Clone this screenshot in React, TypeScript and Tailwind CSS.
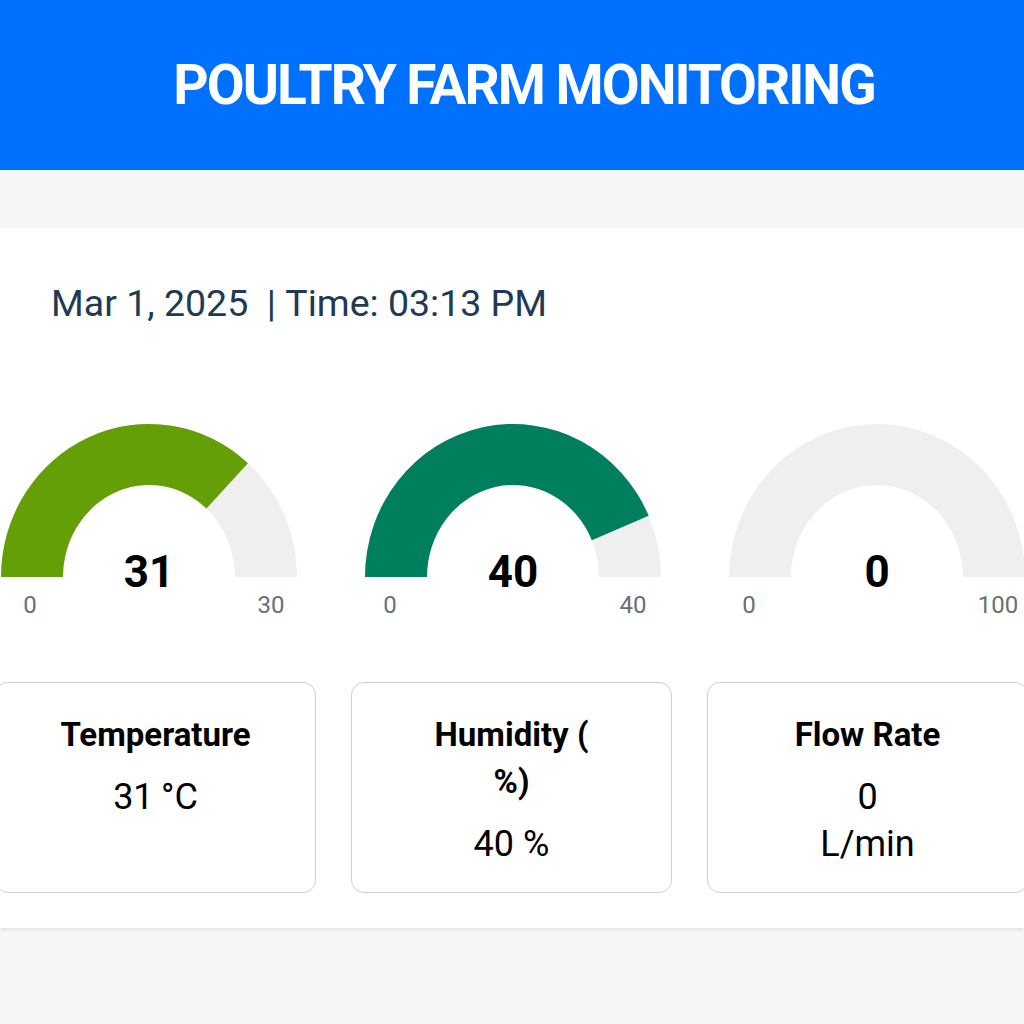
import React from "react";

type GaugeProps = { value: string; min: string; max: string; frac: number; color: string; lx: number; rx: number };

function ringPath(a0: number, a1: number) {
  const cx = 182, cy = 157;
  const orx = 148, ory = 153, irx = 86, iry = 92;
  const r = (d: number) => (d * Math.PI) / 180;
  const p = (rx: number, ry: number, d: number) => [cx + rx * Math.cos(r(d)), cy - ry * Math.sin(r(d))];
  const [ox0, oy0] = p(orx, ory, a0);
  const [ox1, oy1] = p(orx, ory, a1);
  const [ix1, iy1] = p(irx, iry, a1);
  const [ix0, iy0] = p(irx, iry, a0);
  return `M ${ox0} ${oy0} A ${orx} ${ory} 0 0 1 ${ox1} ${oy1} L ${ix1} ${iy1} A ${irx} ${iry} 0 0 0 ${ix0} ${iy0} Z`;
}

function Gauge({ value, min, max, frac, color, lx, rx }: GaugeProps) {
  const split = 180 - 180 * frac;
  return (
    <div className="w-[364px] shrink-0 flex flex-col">
      <div className="relative h-[160px]">
        <svg width="364" height="160" viewBox="0 0 364 160">
          <path d={ringPath(180, 0)} fill="#efefef" />
          {frac > 0 && <path d={ringPath(180, split)} fill={color} />}
        </svg>
        <div className="absolute left-0 right-0 top-[130px] text-center text-[44px] leading-none font-bold text-black">
          {value}
        </div>
      </div>
      <div className="relative mt-[13px] h-[24px] text-[24px] leading-[24px] text-[#687073]">
        <span className="absolute top-0 w-[60px] text-center" style={{ left: lx - 30 }}>{min}</span>
        <span className="absolute top-0 w-[60px] text-center" style={{ left: rx - 30 }}>{max}</span>
      </div>
    </div>
  );
}

function StatBox({ title, lines }: { title: string[]; lines: string[] }) {
  return (
    <div className="w-[321px] h-[211px] shrink-0 rounded-[13px] border border-[#cfcfcf] bg-white pt-[28px] text-center text-black">
      {title.map((t, i) => (
        <div key={i} className="text-[33px] leading-[47px] font-bold">{t}</div>
      ))}
      <div className="mt-[16px]">
        {lines.map((l, i) => (
          <div key={i} className="text-[36px] leading-[47px]">{l}</div>
        ))}
      </div>
    </div>
  );
}

export default function App() {
  return (
    <div className="min-h-[1024px] w-[1024px] overflow-hidden bg-[#f6f6f6]" style={{ fontFamily: "Roboto, 'Noto Sans', sans-serif" }}>
      <header className="h-[170px] bg-[#0070ff] flex items-center justify-center">
        <h1 className="text-[55px] font-bold text-white tracking-[-2px] ml-[24px]">POULTRY FARM MONITORING</h1>
      </header>
      <main className="mt-[58px] bg-white h-[700px] shadow-[0_2px_3px_rgba(0,0,0,0.08)] pt-[51px]">
        <div className="pl-[51px] text-[37.5px] leading-[48px] text-[#1f3a52]">
          Mar 1, 2025 &nbsp;|&nbsp;Time: 03:13 PM
        </div>
        <div className="mt-[93px] ml-[-33px] flex">
          <Gauge value="31" min="0" max="30" frac={0.733} color="#659f08" lx={63} rx={304} />
          <Gauge value="40" min="0" max="40" frac={0.869} color="#007f5f" lx={59} rx={302} />
          <Gauge value="0" min="0" max="100" frac={0} color="#007f5f" lx={54} rx={303} />
        </div>
        <div className="mt-[65px] ml-[-5px] flex gap-[35px]">
          <StatBox title={["Temperature"]} lines={["31\u2009°C"]} />
          <StatBox title={["Humidity (", "%)"]} lines={["40 %"]} />
          <StatBox title={["Flow Rate"]} lines={["0", "L/min"]} />
        </div>
      </main>
    </div>
  );
}
